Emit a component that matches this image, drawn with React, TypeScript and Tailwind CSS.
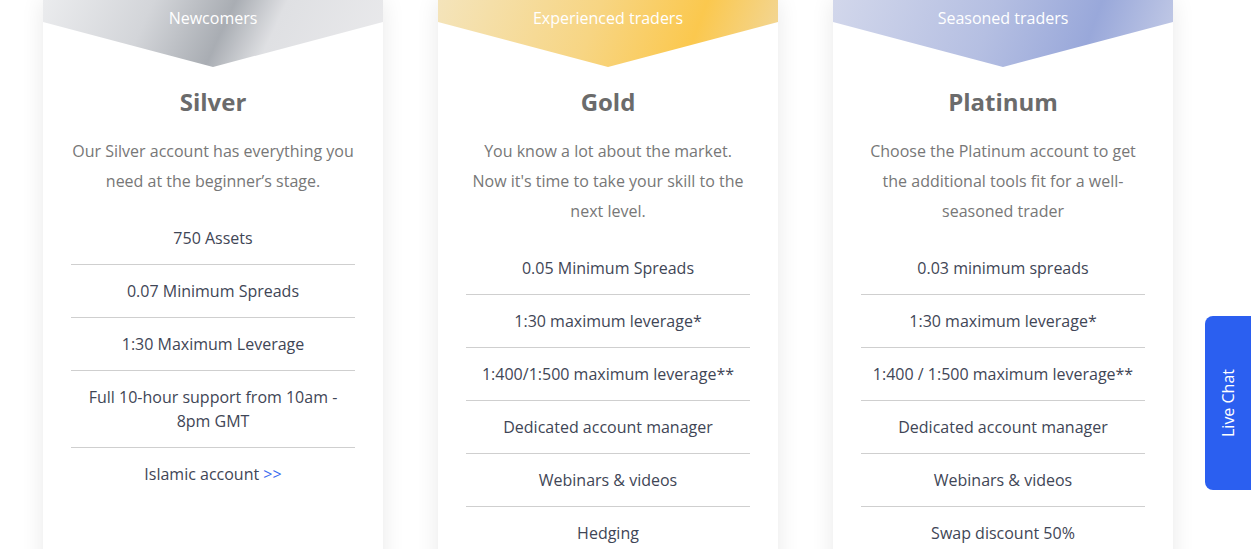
import React from "react";

type Plan = {
  tag: string;
  name: string;
  desc: string;
  items: React.ReactNode[];
  headerClass: string;
};

const plans: Plan[] = [
  {
    tag: "Newcomers",
    name: "Silver",
    desc: "Our Silver account has everything you need at the beginner’s stage.",
    headerClass:
      "bg-[linear-gradient(115deg,#ebecee_0%,#d3d5d9_30%,#a9adb3_52%,#dfe0e3_66%,#eaeaec_100%)]",
    items: [
      "750 Assets",
      "0.07 Minimum Spreads",
      "1:30 Maximum Leverage",
      "Full 10-hour support from 10am - 8pm GMT",
      <>
        Islamic account <span className="text-[#3b6cf0]">&gt;&gt;</span>
      </>,
    ],
  },
  {
    tag: "Experienced traders",
    name: "Gold",
    desc: "You know a lot about the market. Now it's time to take your skill to the next level.",
    headerClass:
      "bg-[linear-gradient(110deg,#f4e4bb_0%,#f7d583_45%,#fbc84e_74%,#f1d89f_100%)]",
    items: [
      "0.05 Minimum Spreads",
      "1:30 maximum leverage*",
      "1:400/1:500 maximum leverage**",
      "Dedicated account manager",
      "Webinars & videos",
      "Hedging",
    ],
  },
  {
    tag: "Seasoned traders",
    name: "Platinum",
    desc: "Choose the Platinum account to get the additional tools fit for a well-seasoned trader",
    headerClass:
      "bg-[linear-gradient(110deg,#d2d7eb_0%,#b5bfe2_45%,#99a8da_74%,#c6cde7_100%)]",
    items: [
      "0.03 minimum spreads",
      "1:30 maximum leverage*",
      "1:400 / 1:500 maximum leverage**",
      "Dedicated account manager",
      "Webinars & videos",
      "Swap discount 50%",
    ],
  },
];

function PlanCard({ plan }: { plan: Plan }) {
  return (
    <div className="w-[340px] shrink-0 bg-white shadow-[0_0_22px_rgba(0,0,0,0.09)] pb-10">
      <div
        className={`h-[67px] ${plan.headerClass} [clip-path:polygon(0_0,100%_0,100%_22px,50%_67px,0_22px)] flex justify-center`}
      >
        <span className="text-white text-[16px] leading-[24px] mt-[6px]">{plan.tag}</span>
      </div>
      <div className="px-7 text-center">
        <h2 className="mt-[19px] text-[24px] leading-[32px] font-bold text-[#6b6b6b]">
          {plan.name}
        </h2>
        <p className="mt-[18px] text-[16px] leading-[30px] text-[#777]">{plan.desc}</p>
        <ul className="mt-4">
          {plan.items.map((item, i) => (
            <li
              key={i}
              className={`py-[14px] text-[16px] leading-[24px] text-[#3f4656] ${
                i < plan.items.length - 1 ? "border-b border-[#cfcfcf]" : ""
              }`}
            >
              {item}
            </li>
          ))}
        </ul>
      </div>
    </div>
  );
}

export default function App() {
  return (
    <div
      className="relative h-[549px] w-[1251px] overflow-hidden bg-white"
      style={{ fontFamily: '"Open Sans", "Noto Sans", sans-serif' }}
    >
      <div className="flex gap-[55px] pl-[43px]">
        {plans.map((p) => (
          <PlanCard key={p.name} plan={p} />
        ))}
      </div>
      <button className="absolute right-0 top-[316px] h-[174px] w-[46px] rounded-l-[8px] bg-[#2b5ff0] flex items-center justify-center">
        <span className="text-white text-[16px] whitespace-nowrap -rotate-90">Live Chat</span>
      </button>
    </div>
  );
}
